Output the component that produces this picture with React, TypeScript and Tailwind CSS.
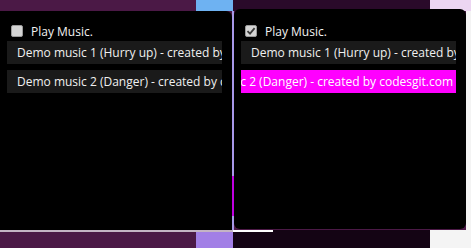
import React from 'react';

type Track = { id: number; title: string };

const TRACKS: Track[] = [
  { id: 1, title: 'Demo music 1 (Hurry up) - created by codesgit.com' },
  { id: 2, title: 'Demo music 2 (Danger) - created by codesgit.com' },
];

const Checkbox: React.FC<{ checked?: boolean }> = ({ checked }) => (
  <div className="w-[12px] h-[12px] rounded-[2px] bg-[#d4d4d4] border border-[#9a9a9a] flex items-center justify-center shrink-0">
    {checked && (
      <svg width="10" height="10" viewBox="0 0 10 10">
        <path d="M1.5 5.2 L4 7.6 L8.6 2.2" fill="none" stroke="#3a3a3a" strokeWidth="1.8" />
      </svg>
    )}
  </div>
);

// one music player window
const Panel: React.FC<{ checked?: boolean; active?: number; className: string }> = ({ checked, active, className }) => (
  <div className={`bg-black flex flex-col w-[232px] shrink-0 pl-[7px] ${className}`}>
    <label className="flex items-center gap-[8px] h-[12px] pl-[4px]">
      <Checkbox checked={checked} />
      <span className="text-[12px] text-[#f2f2f2] leading-none pt-[2px]">Play Music.</span>
    </label>
    <div className="flex flex-col gap-[6px] mt-[4px]">
      {TRACKS.map(t => (
        <div
          key={t.id}
          className={`w-[215px] h-[23px] flex items-center overflow-hidden whitespace-nowrap text-[12px] ${
            active === t.id ? 'bg-[#ff00ff] text-white justify-end pr-[3px]' : 'bg-[#1a1a1a] text-[#f0f0f0] pl-[10px]'
          }`}
        >
          <span className="shrink-0">{t.title}</span>
        </div>
      ))}
    </div>
  </div>
);

export default function App() {
  return (
    <div
      className="w-[471px] h-[248px] overflow-hidden flex flex-col bg-[#4b1946]"
      style={{ fontFamily: '"Open Sans", "Noto Sans", sans-serif' }}
    >
      {/* desktop strip above the windows */}
      <div className="h-[11px] flex shrink-0">
        <div className="w-[196px] bg-[#4b1946]" />
        <div className="w-[37px] bg-[#6eb2f2]" />
        <div className="w-[197px] bg-[#2a0a2a]" />
        <div className="flex-1 bg-[#ecd6f2]" />
      </div>

      {/* windows */}
      <div className="h-[219px] flex shrink-0">
        <Panel className="h-[219px] rounded-tr-[6px] pt-[14px]" />
        <div className="w-[2px] flex flex-col bg-[#a898e8]">
          <div className="h-[165px]" />
          <div className="h-[40px] bg-[#c000e0]" />
        </div>
        <Panel checked active={2} className="h-[220px] -mt-[2px] rounded-[6px] pt-[16px]" />
        <div className="flex-1 bg-[#f4f4f4]" />
      </div>

      {/* desktop strip below */}
      <div className="flex-1 flex">
        <div className="w-[233px] flex flex-col">
          <div className="h-[2px] bg-[#c4b4c4]" />
          <div className="flex-1 flex">
            <div className="w-[196px] bg-[#4b1946]" />
            <div className="flex-1 bg-[#a27fe6]" />
          </div>
        </div>
        <div className="w-[197px] flex flex-col bg-[#140414]">
          <div className="w-[40px] h-[2px] bg-white" />
        </div>
        <div className="flex-1 bg-[#f4f4f4]" />
      </div>
    </div>
  );
}
